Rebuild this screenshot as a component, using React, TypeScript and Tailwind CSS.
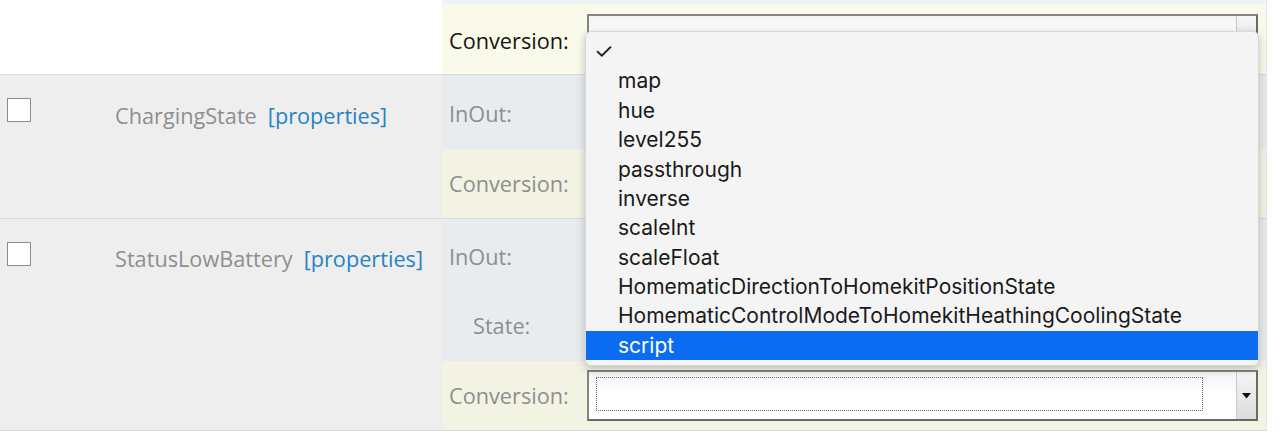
import React from "react";

function Select({ focused }: { focused?: boolean }) {
  return (
    <div className="flex w-[671px] h-[51px] border-2 border-[#858585] border-b-[#666] border-r-[#6a6a6a] bg-gradient-to-b from-[#f4f4f4] via-white to-white">
      <div className="flex-1 pl-[7px] pr-[33px] pt-[5px] pb-[8px]">
        {focused ? <div className="h-full border border-dotted border-[#666]" /> : null}
      </div>
      <div className="w-[20px] flex items-center justify-center bg-gradient-to-b from-[#f6f6f6] to-[#dcdcdc] border-l border-[#c8c8c8]">
        <svg width="9" height="6" viewBox="0 0 9 6">
          <path d="M0 0 L9 0 L4.5 5.5 Z" fill="#111" />
        </svg>
      </div>
    </div>
  );
}

function Checkbox() {
  return <div className="w-[24px] h-[24px] border-[1.5px] border-[#8d8d8d] bg-white" />;
}

const items = [
  "map",
  "hue",
  "level255",
  "passthrough",
  "inverse",
  "scaleInt",
  "scaleFloat",
  "HomematicDirectionToHomekitPositionState",
  "HomematicControlModeToHomekitHeathingCoolingState",
  "script",
];

export default function App() {
  return (
    <div className="relative w-[1280px] h-[445px] overflow-hidden bg-white font-['Open_Sans',sans-serif] text-[21.7px]">
      <div className="w-[1267px] border-r border-[#e4e4e4]">
        {/* partial top row */}
        <div className="flex h-[75px] border-b border-[#dadada]">
          <div className="w-[442px] bg-white" />
          <div className="flex-1 flex flex-col">
            <div className="h-[4px] bg-[#eef3f6]" />
            <div className="flex-1 flex items-center bg-[#fafaea] pr-[8px]">
              <div className="w-[145px] pl-[7px] pt-[4px] text-[#151515]">Conversion:</div>
              <Select />
            </div>
          </div>
        </div>

        {/* ChargingState row */}
        <div className="flex h-[144px] border-b border-[#dadada] bg-[#eeeeee]">
          <div className="w-[442px] flex items-start pt-[23px]">
            <div className="w-[115px] pl-[7px]">
              <Checkbox />
            </div>
            <div className="flex items-center gap-[11px] mt-[2px] whitespace-nowrap">
              <span className="text-[#8e8e8e]">ChargingState</span>
              <span className="text-[#2584c0]">[properties]</span>
            </div>
          </div>
          <div className="flex-1 flex flex-col">
            <div className="h-[74px] flex items-center bg-[#e8ecef] pr-[8px]">
              <div className="w-[145px] pl-[7px] pt-[4px] text-[#8e8e8e]">InOut:</div>
            </div>
            <div className="flex-1 flex items-center bg-[#f3f3e4] pr-[8px]">
              <div className="w-[145px] pl-[7px] pt-[2px] text-[#8e8e8e]">Conversion:</div>
            </div>
          </div>
        </div>

        {/* StatusLowBattery row */}
        <div className="flex h-[212px] border-b border-[#dadada] bg-[#eeeeee]">
          <div className="w-[442px] flex items-start pt-[23px]">
            <div className="w-[115px] pl-[7px]">
              <Checkbox />
            </div>
            <div className="flex items-center gap-[11px] mt-[1px] whitespace-nowrap">
              <span className="text-[#8e8e8e]">StatusLowBattery</span>
              <span className="text-[#2584c0]">[properties]</span>
            </div>
          </div>
          <div className="flex-1 flex flex-col">
            <div className="h-[71px] flex items-center bg-[#e8ecef] pr-[8px]">
              <div className="w-[145px] pl-[7px] pt-[6px] text-[#8e8e8e]">InOut:</div>
            </div>
            <div className="h-[71px] flex items-center bg-[#e8ecef] pr-[8px]">
              <div className="w-[145px] pl-[31px] pt-[2px] text-[#8e8e8e]">State:</div>
            </div>
            <div className="flex-1 flex items-center bg-[#f3f3e4] pr-[8px]">
              <div className="w-[145px] pl-[7px] pt-[2px] text-[#8e8e8e]">Conversion:</div>
              <Select focused />
            </div>
          </div>
        </div>
      </div>

      {/* open dropdown menu */}
      <div className="absolute left-[585px] top-[31px] w-[674px] py-[5px] rounded-[6px] bg-[#f4f4f4] border border-[#d8d8d8] shadow-[0_3px_10px_rgba(0,0,0,0.22)] font-['Inter',sans-serif] text-[21px] text-[#1a1a1a]">
        <div className="h-[29.4px] flex items-center pl-[8px] text-[22px]">✓</div>
        {items.map((it) => (
          <div
            key={it}
            className={
              it === "script"
                ? "h-[29.4px] flex items-center pl-[32px] bg-[#0b6cf2] text-white"
                : "h-[29.4px] flex items-center pl-[32px]"
            }
          >
            {it}
          </div>
        ))}
      </div>
    </div>
  );
}
